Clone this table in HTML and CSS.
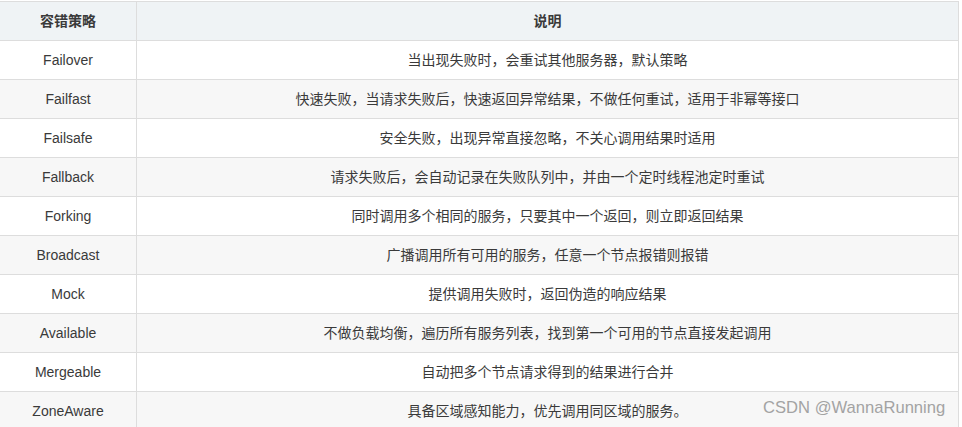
FILE: index.html
```html
<!DOCTYPE html>
<html lang="zh-CN">
<head>
<meta charset="utf-8">
<title>容错策略</title>
<link rel="stylesheet" href="styles.css">
</head>
<body>
<div class="wrap">
<table class="tbl">
  <thead>
    <tr><th class="c1">容错策略</th><th>说明</th></tr>
  </thead>
  <tbody>
    <tr><td class="c1">Failover</td><td>当出现失败时，会重试其他服务器，默认策略</td></tr>
    <tr><td class="c1">Failfast</td><td>快速失败，当请求失败后，快速返回异常结果，不做任何重试，适用于非幂等接口</td></tr>
    <tr><td class="c1">Failsafe</td><td>安全失败，出现异常直接忽略，不关心调用结果时适用</td></tr>
    <tr><td class="c1">Fallback</td><td>请求失败后，会自动记录在失败队列中，并由一个定时线程池定时重试</td></tr>
    <tr><td class="c1">Forking</td><td>同时调用多个相同的服务，只要其中一个返回，则立即返回结果</td></tr>
    <tr><td class="c1">Broadcast</td><td>广播调用所有可用的服务，任意一个节点报错则报错</td></tr>
    <tr><td class="c1">Mock</td><td>提供调用失败时，返回伪造的响应结果</td></tr>
    <tr><td class="c1">Available</td><td>不做负载均衡，遍历所有服务列表，找到第一个可用的节点直接发起调用</td></tr>
    <tr><td class="c1">Mergeable</td><td>自动把多个节点请求得到的结果进行合并</td></tr>
    <tr><td class="c1">ZoneAware</td><td>具备区域感知能力，优先调用同区域的服务。</td></tr>
  </tbody>
</table>
<div class="watermark">CSDN @WannaRunning</div>
</div>
</body>
</html>
```
FILE: styles.css
```css
html, body {
  margin: 0;
  padding: 0;
  background: #ffffff;
  overflow: hidden;
}
.wrap {
  position: relative;
  width: 962px;
  height: 427px;
  overflow: hidden;
  padding-top: 1px;
  box-sizing: border-box;
}
.tbl {
  margin-left: -1px;
  width: 960px;
  border-collapse: collapse;
  table-layout: fixed;
  font-family: "Liberation Sans", Arial, "Noto Sans CJK SC", sans-serif;
  font-size: 14px;
  color: #3a3a3a;
}
.tbl th, .tbl td {
  border: 1px solid #dddddd;
  height: 39px;
  padding: 0 8px;
  text-align: center;
  vertical-align: middle;
  box-sizing: border-box;
  line-height: 20px;
}
.tbl th {
  background: #eff3f5;
  font-weight: bold;
}
.tbl .c1 {
  width: 137px;
}
.tbl tbody tr:nth-child(odd) td {
  background: #ffffff;
}
.tbl tbody tr:nth-child(even) td {
  background: #f7f7f7;
}
.watermark {
  position: absolute;
  left: 763px;
  top: 398px;
  font-family: "Liberation Sans", Arial, sans-serif;
  font-size: 16.6px;
  color: #a3a3a3;
}
```
